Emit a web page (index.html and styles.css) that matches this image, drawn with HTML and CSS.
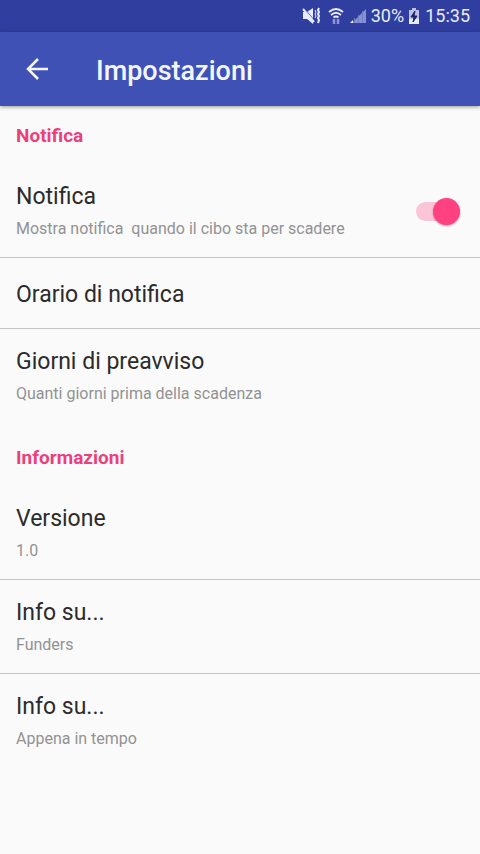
FILE: index.html
```html
<!DOCTYPE html>
<html lang="it">
<head>
<meta charset="utf-8">
<meta name="viewport" content="width=device-width, initial-scale=1">
<title>Impostazioni</title>
<link rel="stylesheet" href="styles.css">
</head>
<body>
<div class="status">
  <svg class="status-icon" width="18" height="18" viewBox="0 0 18 18" aria-hidden="true">
    <path d="M1 5h4l6-4v16l-6-5H1z" fill="currentColor"/>
    <path d="M2 1l10 12" stroke="#303f9f" stroke-width="1"/>
    <path d="M1 2l11 13" stroke="currentColor" stroke-width="2"/>
    <path d="M13 3l1 2-1 2 1 2-1 2" fill="none" stroke="currentColor" stroke-width="1"/>
    <path d="M17 1l-1 2 1 2-1 2 1 2-1 2 1 2-1 3" fill="none" stroke="currentColor" stroke-width="2"/>
  </svg>
  <svg class="status-icon wifi" width="16" height="20" viewBox="0 0 16 20" aria-hidden="true">
    <g fill="none" stroke="currentColor" stroke-width="1.800">
      <path d="M1 6q7-6 14 0M3 9q5-4.500 10 0M5.500 11.500q2.500-2 5 0"/>
    </g>
    <path d="M6 13v5M10 13v5" fill="none" stroke="#8c96d6" stroke-width="2.500"/>
  </svg>
  <svg class="status-icon signal" width="18" height="18" viewBox="0 0 18 18" aria-hidden="true">
    <path d="M3 16L17 2v14z" fill="#8790d0"/>
    <path d="M1 16h3v-3z" fill="currentColor"/>
    <path d="M5.500 11v5M9.500 8v8M13.500 4v12" stroke="#757fc8"/>
  </svg>
  <span class="battery-level">30%</span>
  <svg class="status-icon battery" width="12" height="18" viewBox="0 0 12 18" aria-hidden="true">
    <path d="M4 1h4v2h3v14H1V3h3z" fill="#b9c0e8"/>
    <path d="M1 12h10v5H1z" fill="currentColor"/>
    <path d="M7 4L3 10h3l-1 5 4-6H6z" fill="#1d2760" stroke="#1d2760"/>
  </svg>
  <time>15:35</time>
</div>
<header class="app-bar">
  <button class="back" type="button" aria-label="Indietro">
    <svg width="24" height="24" viewBox="0 0 24 24" aria-hidden="true"><path d="M22 12H3M12 2L2 12l10 10" fill="none" stroke="currentColor" stroke-width="2.500"/></svg>
  </button>
  <h1>Impostazioni</h1>
</header>
<main>
  <section>
    <h2>Notifica</h2>
    <label class="item" for="notify">
      <span class="text">
        <span class="title">Notifica</span>
        <span class="summary">Mostra notifica&nbsp; quando il cibo sta per scadere</span>
      </span>
      <input class="switch" id="notify" type="checkbox" role="switch" checked>
    </label>
    <button class="item single" type="button">
      <span class="title">Orario di notifica</span>
    </button>
    <button class="item" type="button">
      <span class="text">
        <span class="title">Giorni di preavviso</span>
        <span class="summary">Quanti giorni prima della scadenza</span>
      </span>
    </button>
  </section>
  <section>
    <h2>Informazioni</h2>
    <button class="item" type="button">
      <span class="text">
        <span class="title">Versione</span>
        <span class="summary">1.0</span>
      </span>
    </button>
    <button class="item" type="button">
      <span class="text">
        <span class="title">Info su...</span>
        <span class="summary">Funders</span>
      </span>
    </button>
    <button class="item" type="button">
      <span class="text">
        <span class="title">Info su...</span>
        <span class="summary">Appena in tempo</span>
      </span>
    </button>
  </section>
</main>
</body>
</html>
```
FILE: styles.css
```css
* {
  box-sizing: border-box;
}

body {
  margin: 0;
  min-height: 100vh;
  background: #fafafa;
  color: #2b2b2b;
  font-family: Roboto, "Liberation Sans", sans-serif;
}

button {
  border: 0;
  background: none;
  color: inherit;
  font: inherit;
  text-align: left;
}

.status {
  display: flex;
  align-items: center;
  justify-content: flex-end;
  height: 32px;
  padding: 0 10px;
  background: #303f9f;
  color: #e8ebff;
  font-size: 18px;
  line-height: 32px;
}

.status-icon {
  flex: none;
}

.wifi {
  margin-left: 8px;
}

.signal {
  margin: 0 4px 0 5px;
}

.battery {
  margin: 0 5px 0 4px;
}

.app-bar {
  display: flex;
  align-items: center;
  height: 74px;
  padding: 0 16px;
  background: #3f51b5;
  box-shadow: 0 1px 4px rgba(0, 0, 0, 0.4);
  color: #f4f6ff;
}

.back {
  display: flex;
  width: 80px;
  padding: 10px;
}

h1 {
  margin: 0;
  padding-top: 4px;
  font-size: 27px;
  font-weight: 500;
  line-height: 36px;
}

h2 {
  margin: 0;
  padding: 18px 16px 16px;
  color: #ec407a;
  font-size: 19px;
  font-weight: 700;
  line-height: 24px;
}

section + section {
  padding-top: 6px;
}

.item {
  display: flex;
  align-items: center;
  justify-content: space-between;
  width: 100%;
  padding: 19px 20px 17px 16px;
}

.item:not(:last-child) {
  border-bottom: 1px solid #c4c4c4;
}

.single {
  padding: 23px 16px 19px;
}

.text {
  display: flex;
  flex-direction: column;
  gap: 7px;
}

.title {
  font-size: 23px;
  line-height: 28px;
}

.summary {
  color: #929292;
  font-size: 16px;
  line-height: 22px;
}

.switch {
  display: flex;
  align-items: center;
  justify-content: flex-end;
  flex: none;
  width: 44px;
  height: 19px;
  margin: 0;
  appearance: none;
  background: #fbc4d7;
  border-radius: 10px;
}

.switch::before {
  flex: none;
  width: 27px;
  height: 27px;
  border-radius: 50%;
  background: #ff4081;
  box-shadow: 0 1px 2px rgba(120, 0, 50, 0.4);
  content: "";
}

.switch:not(:checked) {
  justify-content: flex-start;
}
```
